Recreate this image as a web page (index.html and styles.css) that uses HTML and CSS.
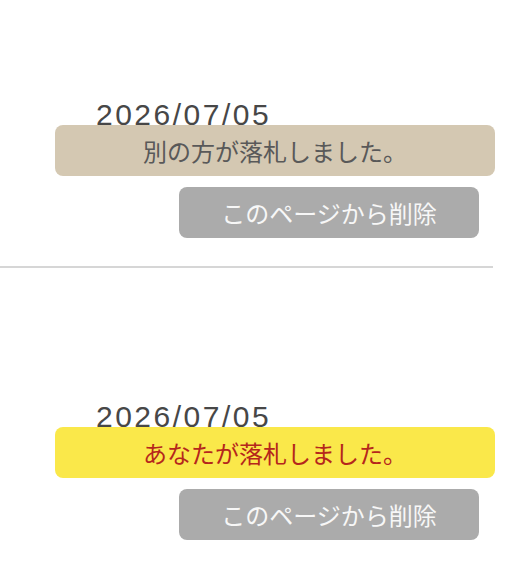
FILE: index.html
```html
<!DOCTYPE html>
<html>
<head>
    <meta charset="utf-8">
    <title>落札結果</title>
    <link rel="stylesheet" href="styles.css">
</head>
<body>
    <div class="list">
        <!-- 他の人が落札 -->
        <div class="item">
            <div class="date">2026/07/05</div>
            <div class="result result-other">別の方が落札しました。</div>
            <button class="delete-btn">このページから削除</button>
        </div>

        <!-- 自分が落札 -->
        <div class="item">
            <div class="date">2026/07/05</div>
            <div class="result result-mine">あなたが落札しました。</div>
            <button class="delete-btn">このページから削除</button>
        </div>
    </div>
</body>
</html>
```

FILE: styles.css
```css
body {
    font-family: "Liberation Sans", "Noto Sans CJK JP", sans-serif;
    margin: 0;
    background: #fff;
}
.list {
    width: 493px;
}
.item {
    display: flex;
    flex-direction: column;
    padding: 134px 0 28px 55px;
    border-bottom: 2px solid #d6d6d6;
}
.item:first-child {
    padding-top: 100px;
}
.date {
    margin-left: 41px;
    font-size: 30px;
    line-height: 30px;
    letter-spacing: 2.5px;
    color: #474747;
}
.result {
    width: 440px;
    height: 51px;
    margin-top: -5px;
    border-radius: 8px;
    display: flex;
    align-items: center;
    justify-content: center;
    font-family: "Noto Sans CJK JP", sans-serif;
    font-size: 24px;
}
.result-other {
    background: #d4c8b2;
    color: #595959;
}
.result-mine {
    background: #fae84a;
    color: #b5261c;
}
.delete-btn {
    align-self: flex-start;
    margin: 11px 0 0 124px;
    width: 300px;
    height: 51px;
    border: none;
    border-radius: 8px;
    background: #ababab;
    color: #f7f7f7;
    font-family: "Noto Sans CJK JP", sans-serif;
    font-size: 24px;
    cursor: pointer;
}
```
